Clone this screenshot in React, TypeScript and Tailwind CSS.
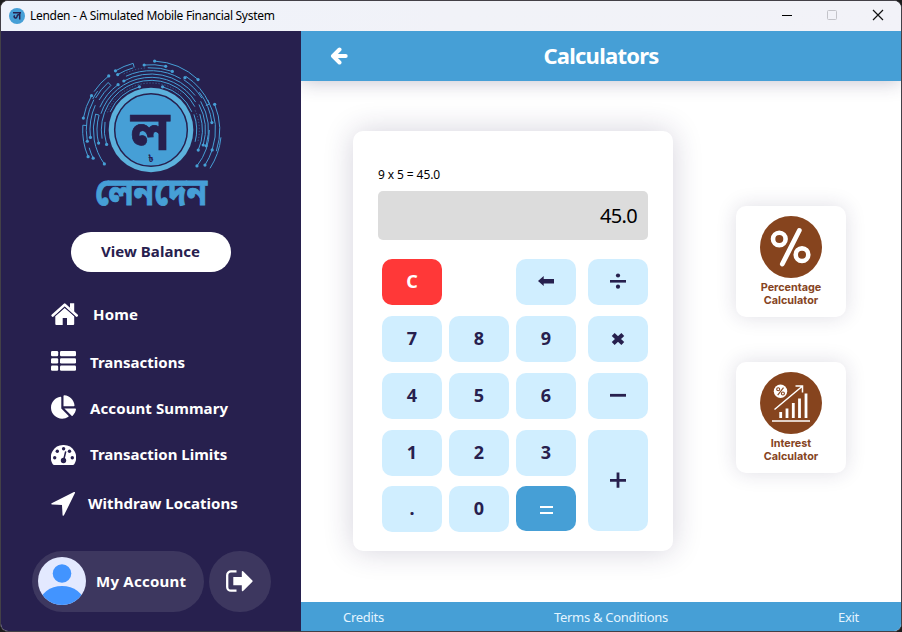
import React from "react";
import { FaChartPie } from "react-icons/fa";

const SANS = "font-['Noto_Sans','Open_Sans',sans-serif]";

/** Point on a circle around the emblem centre; 0deg is straight up, clockwise. */
const pt = (r: number, deg: number) => {
  const a = (deg * Math.PI) / 180;
  return [243 + r * Math.sin(a), 240 - r * Math.cos(a)] as const;
};

type Trace = { r: number; from: number; to: number; dots?: string; end?: number; fine?: boolean };

const traces: Trace[] = [
  { r: 207, from: 3, to: 43, dots: "ab" },
  { r: 196, from: -6, to: 13, dots: "ab" },
  { r: 187, from: -3, to: 20, dots: "b" },
  { r: 207, from: -31, to: -15, dots: "a", end: 194 },
  { r: 194, from: -31, to: -16, dots: "a" },
  { r: 206, from: -56, to: -38, dots: "b" },
  { r: 206, from: -80, to: -60, dots: "ab" },
  { r: 198, from: -62, to: -54 },
  { r: 205, from: -113, to: -86, dots: "a", end: 193 },
  { r: 193, from: -116, to: -106, dots: "a" },
  { r: 194, from: -100, to: -62, dots: "a" },
  { r: 192, from: -60, to: -42, end: 180 },
  { r: 180, from: -60, to: -42 },
  { r: 183, from: -97, to: -66, dots: "a" },
  { r: 173, from: -126, to: -74, dots: "a", end: 162 },
  { r: 168, from: -66, to: -36, dots: "b" },
  { r: 162, from: -104, to: -74, dots: "a" },
  { r: 168, from: -29, to: 52, dots: "a" },
  { r: 178, from: -25, to: 30 },
  { r: 187, from: -26, to: -5, fine: true },
  { r: 158, from: -72, to: 58 },
  { r: 149, from: -100, to: 62 },
  { r: 141, from: -68, to: 40, fine: true },
  { r: 140, from: -108, to: -80, dots: "a" },
  { r: 134, from: -66, to: -15, dots: "b" },
  { r: 134, from: 15, to: 66, dots: "a" },
  { r: 192, from: 33, to: 66, end: 180 },
  { r: 180, from: 33, to: 58 },
  { r: 187, from: 33, to: 33.1, dots: "a" },
  { r: 206, from: 68, to: 108, dots: "a" },
  { r: 211, from: 96, to: 123 },
  { r: 193, from: 108, to: 123, dots: "ab" },
  { r: 193, from: 62, to: 108 },
  { r: 184, from: 52, to: 83, dots: "b" },
  { r: 175, from: 90, to: 128, dots: "b" },
  { r: 172, from: 60, to: 106, dots: "b" },
  { r: 163, from: 62, to: 106, dots: "b" },
  { r: 154, from: 72, to: 113, dots: "b" },
  { r: 145, from: 66, to: 104, fine: true },
  { r: 137, from: 70, to: 105 },
];

const BENGALI = "Noto Sans Bengali, Noto Sans, sans-serif";

function Emblem() {
  return (
    <svg viewBox="0 0 480 510" className="h-[170px] w-40">
      <g fill="none" stroke="#469fd6" strokeWidth="3">
        {traces.map((t, i) => {
          const a = pt(t.r, t.from);
          const b = pt(t.r, t.to);
          const e = t.end ? pt(t.end, t.to) : b;
          return (
            <g key={i} opacity={t.fine ? 0.5 : 1}>
              <path d={`M${a[0]} ${a[1]}A${t.r} ${t.r} 0 0 1 ${b[0]} ${b[1]}L${e[0]} ${e[1]}`} strokeDasharray={t.fine ? "4 5" : undefined} />
              {t.dots?.includes("a") && <circle cx={a[0]} cy={a[1]} r="4.8" fill="#469fd6" stroke="none" />}
              {t.dots?.includes("b") && <circle cx={b[0]} cy={b[1]} r="4.8" fill="#469fd6" stroke="none" />}
            </g>
          );
        })}
      </g>
      <circle cx="243" cy="240" r="127" fill="#5cb1dc" />
      <circle cx="243" cy="240" r="109" fill="#469fd6" stroke="#27204e" strokeWidth="4.500" />
      <text transform="translate(240.500 301) scale(1.030 1.120)" textAnchor="middle" fontSize="150" fontWeight="700" fill="#27204e" stroke="#27204e" strokeWidth="2" fontFamily={BENGALI}>ল</text>
      <text x="243" y="336" textAnchor="middle" fontSize="26" fontWeight="700" fill="#27204e" fontFamily={BENGALI}>৳</text>
      <text transform="translate(243.500 465) scale(1.010 1.170)" textAnchor="middle" fontSize="99" fontWeight="700" fill="#469fd6" stroke="#469fd6" strokeWidth="2" fontFamily={BENGALI}>লেনদেন</text>
    </svg>
  );
}

function HomeIcon() {
  return (
    <svg viewBox="0 0 28 24" className="h-6 w-7" fill="#fff">
      <path d="M19 1.300h4.200V10L19 6.200z" />
      <path d="M1.700 13.500 13.700 2.700 25.700 13.500" fill="none" stroke="#fff" strokeWidth="2.600" strokeLinecap="round" strokeLinejoin="round" />
      <path d="M4.300 14.300 13.700 5.900l9.500 8.400V22a1 1 0 0 1-1 1H16v-7h-4.300v7H5.300a1 1 0 0 1-1-1z" />
      <path d="M3.500 14.300 13.700 5.100l10.200 9.200" fill="none" stroke="#27204e" strokeWidth=".8" />
    </svg>
  );
}

function ListIcon() {
  return (
    <svg viewBox="0 0 25 20" className="h-5 w-[25px]" fill="#fff">
      {[0, 7.2, 14.5].map((y) => (
        <g key={y}>
          <rect x="0" y={y} width="7.200" height="5.300" rx="1.200" />
          <rect x="9" y={y} width="16" height="5.300" rx="1.200" />
        </g>
      ))}
    </svg>
  );
}

function GaugeIcon() {
  return (
    <svg viewBox="0 0 25 20" className="h-5 w-[25px]">
      <path d="M12.500 0A12.500 12.500 0 0 1 23.400 18.900Q22.900 20 21.700 20H3.300Q2.100 20 1.600 18.900A12.500 12.500 0 0 1 12.500 0z" fill="#fff" />
      <g fill="#27204e">
        <circle cx="3.700" cy="12.700" r="1.700" />
        <circle cx="6.300" cy="6.300" r="1.700" />
        <circle cx="12.600" cy="3.700" r="1.700" />
        <circle cx="18.500" cy="6.300" r="1.700" />
        <circle cx="21.300" cy="12.700" r="1.700" />
        <circle cx="12.500" cy="15.500" r="2.700" />
      </g>
      <path d="M12.800 14.500 14.600 7" stroke="#27204e" strokeWidth="1.500" strokeLinecap="round" />
    </svg>
  );
}

function ArrowIcon() {
  return (
    <svg viewBox="0 0 25 25" className="h-[25px] w-[25px]">
      <path d="M1 12.800 23.300 1.700 12.300 24 11.700 13.300z" fill="#fff" stroke="#fff" strokeWidth="1.500" strokeLinejoin="round" />
    </svg>
  );
}

function LogoutIcon() {
  return (
    <svg viewBox="0 0 28 24" className="h-6 w-7">
      <path d="M11.500 2.400H6A3.800 3.800 0 0 0 2.200 6.200v11.700A3.800 3.800 0 0 0 6 21.700h5.500" fill="none" stroke="#fff" strokeWidth="2.300" />
      <path d="M8.300 8h8.500V2.600q.3-1.200 1.300-.4l9.300 9.300q.6.6 0 1.200l-9.300 9.200q-1 .8-1.300-.4v-5.300H8.300z" fill="#fff" />
    </svg>
  );
}

function NavItem({ icon, label, className, labelClass = "" }: { icon: React.ReactNode; label: string; className: string; labelClass?: string }) {
  return (
    <div className={`flex h-6 items-center pl-[50px] text-[15px] leading-6 font-bold text-white ${className}`}>
      {icon}
      <span className={`whitespace-nowrap ${labelClass}`}>{label}</span>
    </div>
  );
}

function Key({ children, className = "h-[46px] bg-[#d0eeff] text-[#27204e]" }: { children: React.ReactNode; className?: string }) {
  return <button className={`flex w-[60px] items-center justify-center rounded-[10px] pb-[2px] text-[18px] font-bold ${className}`}>{children}</button>;
}

function ToolCard({ title, children }: { title: string; children: React.ReactNode }) {
  return (
    <div className="flex h-[111px] w-[110px] flex-col items-center rounded-[10px] bg-white pt-[10px] shadow-[0_0_20px_rgba(39,32,78,0.15)]">
      <svg viewBox="0 0 62 62" className="h-[62px] w-[62px]">
        <circle cx="31" cy="31" r="31" fill="#86441e" />
        {children}
      </svg>
      <div className="mt-[4px] w-20 text-center font-['Inter',sans-serif] text-[10.8px] leading-[12.5px] font-bold text-[#86441e]">{title}</div>
    </div>
  );
}

export default function App() {
  return (
    <div className={`h-[632px] w-[902px] overflow-hidden bg-[#1c1c1c] ${SANS}`}>
      <div className="flex h-full w-full flex-col overflow-hidden rounded-[8px] border border-[#434047] bg-white">
        <div className="flex h-[30px] shrink-0 items-center bg-linear-to-r from-[#eff3fb] via-[#f1f2f8] to-[#f2f2f8]">
          <svg viewBox="0 0 16 16" className="mb-px ml-2 h-4 w-4">
            <circle cx="8" cy="8" r="8" fill="#469fd6" />
            <path d="M4 4.700h8M10.700 5v6.500M10.500 7Q8.500 6 8 8.500 7.500 10.500 5.800 9.700 4.300 8.500 5.800 7.500" fill="none" stroke="#27204e" strokeWidth="1.500" />
          </svg>
          <span className="ml-[5px] text-[12px] tracking-[-0.3px] whitespace-nowrap text-black">Lenden - A Simulated Mobile Financial System</span>
          <svg viewBox="0 0 104 12" className="mr-4 mb-[2px] ml-auto h-3 w-[104px]" fill="none">
            <path d="M1 6.500h10" stroke="#000" />
            <rect x="46.500" y="1.500" width="9" height="9" rx="1" stroke="#c3c3c9" />
            <path d="M92 1l10 10M102 1 92 11" stroke="#111" strokeWidth="1.200" />
          </svg>
        </div>
        <div className="flex min-h-0 flex-1">
          <aside className="flex w-[300px] shrink-0 flex-col bg-[#27204e]">
            <div className="mt-[19px] ml-[69px] flex h-[170px]">
              <Emblem />
            </div>
            <button className="mt-3 ml-[70px] h-10 w-40 rounded-full bg-white pr-px pb-[2px] text-[15px] font-bold tracking-[0.05px] text-[#27204e]">View Balance</button>
            <NavItem icon={<HomeIcon />} label="Home" className="mt-[30px] gap-[14px]" labelClass="tracking-[0.15px]" />
            <NavItem icon={<ListIcon />} label="Transactions" className="mt-[23px] gap-[14px]" labelClass="pt-[2px]" />
            <NavItem icon={<FaChartPie className="h-6 w-[25px]" />} label="Account Summary" className="mt-[22px] gap-[14px]" labelClass="pt-[2px] tracking-[0.1px]" />
            <NavItem icon={<GaugeIcon />} label="Transaction Limits" className="mt-[24px] gap-[14px]" labelClass="pb-[2px]" />
            <NavItem icon={<ArrowIcon />} label="Withdraw Locations" className="mt-[24px] gap-[12px]" labelClass="tracking-[0.05px]" />
            <div className="mt-9 ml-[31px] flex gap-[5px]">
              <div className="flex h-[61px] w-[172px] items-center rounded-full bg-[#3d375f] pl-[6px]">
                <svg viewBox="0 0 48 48" className="mb-px h-12 w-12">
                  <clipPath id="avatar">
                    <circle cx="24" cy="24" r="24" />
                  </clipPath>
                  <circle cx="24" cy="24" r="24" fill="#e3e9ff" />
                  <g clipPath="url(#avatar)" fill="#4294ff">
                    <circle cx="24" cy="16.500" r="9.300" />
                    <ellipse cx="24" cy="46" rx="22" ry="17" />
                  </g>
                </svg>
                <span className="ml-[10px] text-[15px] font-bold tracking-[0.25px] whitespace-nowrap text-white">My Account</span>
              </div>
              <div className="flex h-[61px] w-[62px] items-center justify-center rounded-full bg-[#3d375f] pr-[2px] pb-px">
                <LogoutIcon />
              </div>
            </div>
          </aside>
          <main className="flex min-w-0 flex-1 flex-col">
            <header className="z-10 flex h-[50px] shrink-0 items-center bg-[#469fd6] shadow-[0_0_20px_rgba(39,32,78,0.3)] [clip-path:inset(0_0_-30px_0)]">
              <svg viewBox="0 0 18 18" className="ml-[29px] h-[18px] w-[18px]">
                <path d="M9.500 2.500 3 9l6.500 6.500M3.500 9h12.200" fill="none" stroke="#fff" strokeWidth="4" strokeLinecap="round" strokeLinejoin="round" />
              </svg>
              <h1 className="mr-[47px] flex-1 pb-[2px] text-center text-[22px] font-bold tracking-[-0.75px] text-white">Calculators</h1>
            </header>
            <section className="flex min-h-0 flex-1 gap-[63px] pl-[52px]">
              <div className="mt-[50px] h-[420px] w-[320px] rounded-[10px] bg-white px-[25px] pt-[35px] shadow-[0_0_30px_rgba(39,32,78,0.2)]">
                <div className="h-[25px] text-[12px] leading-[18px] tracking-[-0.1px] text-black">9 x 5 = 45.0</div>
                <div className="flex h-[49px] items-center justify-end rounded-[5px] bg-[#dcdcdc] pr-[11px] text-[20px] tracking-[-0.7px] text-black">45.0</div>
                <div className="mt-[19px] flex gap-3 pl-1">
                  <div className="grid grid-cols-[60px_60px_60px] grid-rows-[46px_46px_46px_46px] gap-x-[7px] gap-y-[11px]">
                    <Key className="h-[46px] bg-[#ff3838] text-white">C</Key>
                    <span />
                    <Key>
                      <svg viewBox="0 0 16 12" className="h-3 w-4">
                        <path d="M0 6 5.700 1v3H16v4.400H5.700V11z" fill="#27204e" />
                      </svg>
                    </Key>
                    {["7", "8", "9", "4", "5", "6", "1", "2", "3"].map((n) => (
                      <Key key={n}>{n}</Key>
                    ))}
                    <div className="col-span-3 -mt-px flex gap-[7px]">
                      <Key>.</Key>
                      <Key>0</Key>
                      <Key className="h-[45px] bg-[#469fd6] text-white">
                        <svg viewBox="0 0 13 8" className="mt-1 h-2 w-[13px]">
                          <path d="M0 1h13M0 7h13" stroke="#fff" strokeWidth="2" />
                        </svg>
                      </Key>
                    </div>
                  </div>
                  <div className="flex flex-col gap-[11px]">
                    <Key>
                      <svg viewBox="0 0 16 16" className="h-4 w-4" fill="#27204e">
                        <rect y="7" width="16" height="2.600" />
                        <circle cx="8" cy="2.500" r="2.100" />
                        <circle cx="8" cy="13.700" r="2.100" />
                      </svg>
                    </Key>
                    <Key>
                      <svg viewBox="0 0 14 14" className="mt-px h-3.5 w-3.5">
                        <path d="m2.200 2.500 9.600 9M11.800 2.500l-9.600 9" stroke="#27204e" strokeWidth="4.200" />
                      </svg>
                    </Key>
                    <Key>
                      <svg viewBox="0 0 16 4" className="h-1 w-4">
                        <path d="M0 2.300h16" stroke="#27204e" strokeWidth="2.800" />
                      </svg>
                    </Key>
                    <Key className="h-[101px] bg-[#d0eeff]">
                      <svg viewBox="0 0 16 16" className="h-4 w-4">
                        <path d="M0 8.300h16M8 .5v15.300" stroke="#27204e" strokeWidth="2.800" />
                      </svg>
                    </Key>
                  </div>
                </div>
              </div>
              <div className="mt-[125px] flex flex-col gap-[45px]">
                <ToolCard title="Percentage Calculator">
                  <g fill="none" stroke="#fff">
                    <circle cx="19.300" cy="23" r="6.300" strokeWidth="4.600" />
                    <circle cx="42" cy="38.700" r="6.300" strokeWidth="4.600" />
                    <path d="M39.300 14.500 22.300 48" strokeWidth="4.800" strokeLinecap="round" />
                  </g>
                </ToolCard>
                <ToolCard title="Interest Calculator">
                  <circle cx="20.500" cy="19.300" r="6.700" fill="#fff" />
                  <g fill="none" stroke="#86441e" strokeWidth="1.100">
                    <circle cx="18.200" cy="17.300" r="1.500" />
                    <circle cx="22.900" cy="21.500" r="1.500" />
                    <path d="m23.500 15.700-5.800 7.500" />
                  </g>
                  <path d="M14.500 37.500 42 14.500M35.500 14h7v6.500" fill="none" stroke="#fff" strokeWidth="1.500" />
                  <path d="M12 49h38" stroke="#fff" strokeWidth="1.300" />
                  <path d="M20.700 46v-6M27 46v-9.500M33.300 46V31M39.500 46V26.500M46 46V21.500" stroke="#fff" strokeWidth="2.800" />
                </ToolCard>
              </div>
            </section>
            <footer className="flex h-[29px] shrink-0 items-center justify-between bg-[#469fd6] pt-[2px] pr-[42px] pl-[42px] text-[13px] tracking-[-0.3px] text-[#e3f4ff]">
              <span>Credits</span>
              <span>Terms &amp; Conditions</span>
              <span>Exit</span>
            </footer>
          </main>
        </div>
      </div>
    </div>
  );
}
